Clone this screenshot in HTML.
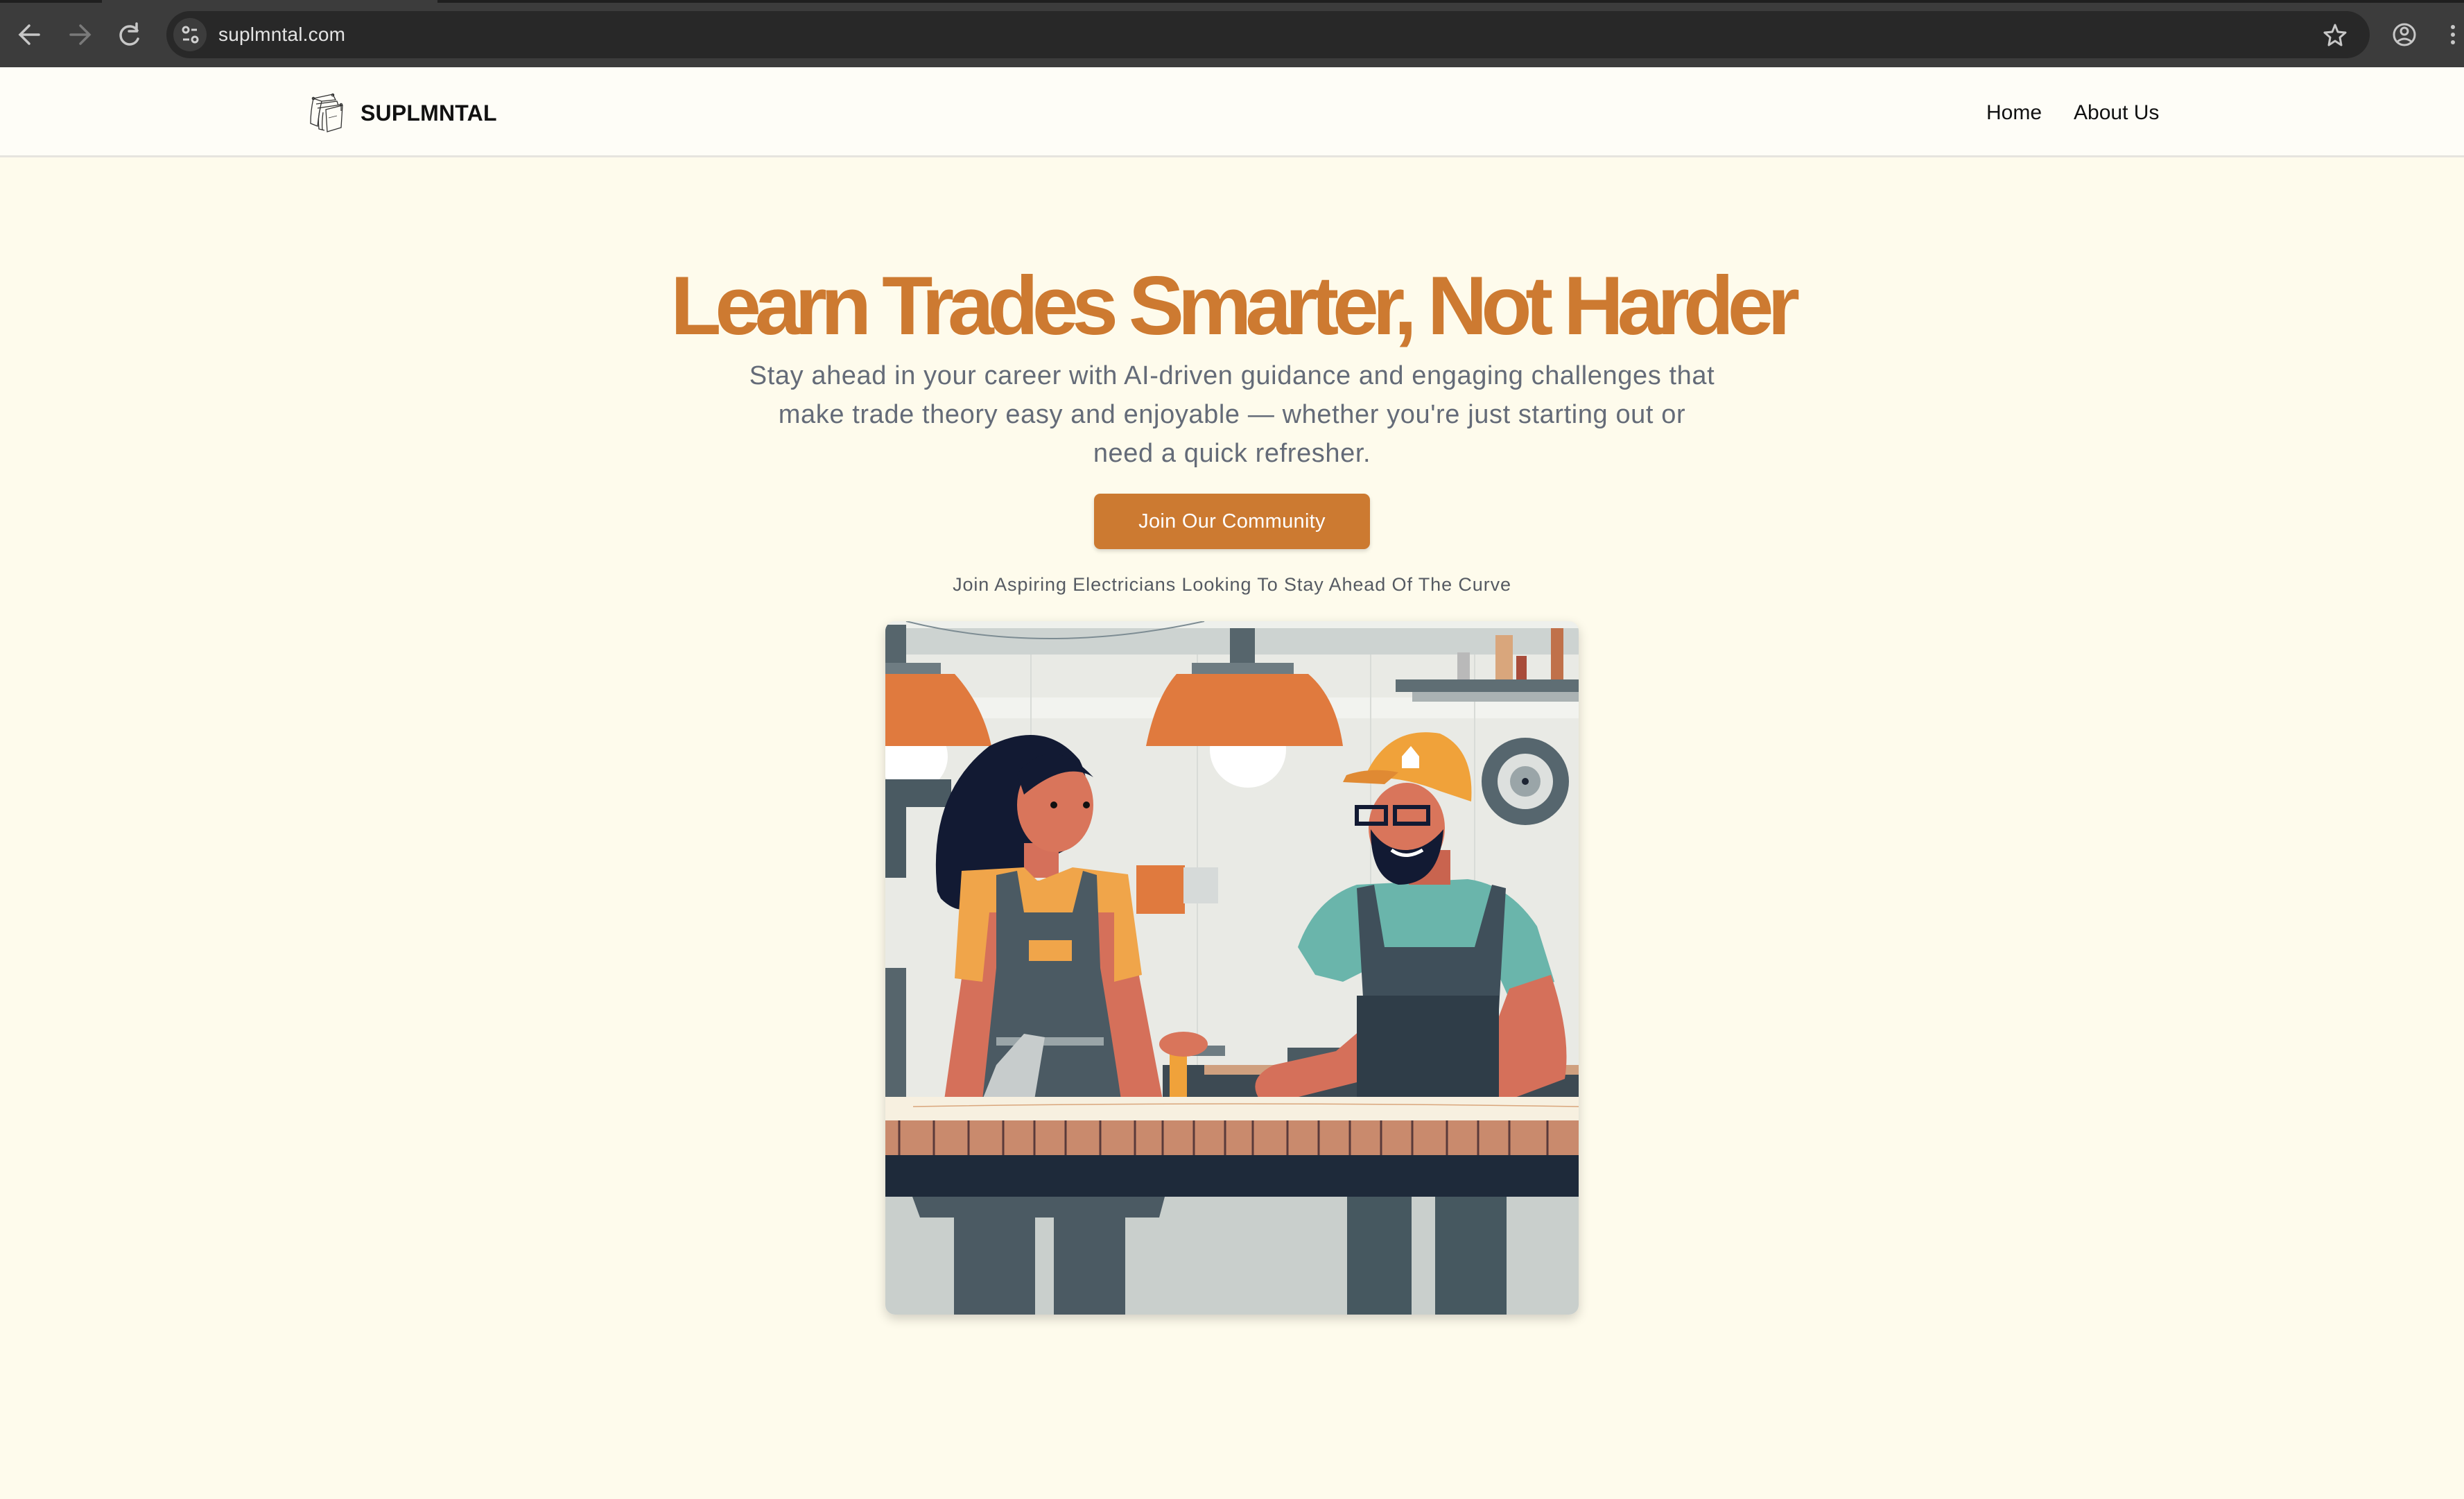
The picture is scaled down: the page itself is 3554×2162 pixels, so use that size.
<!DOCTYPE html>
<html><head><meta charset="utf-8">
<style>
*{margin:0;padding:0;box-sizing:border-box}
html,body{width:3554px;height:2162px;overflow:hidden;background:#fefbec;font-family:"Liberation Sans",sans-serif}
.chrome{position:absolute;left:0;top:0;width:3554px;height:97px;background:#3c3c3c}
.topstrip{position:absolute;left:0;top:0;width:3554px;height:4px;background:#1f1f1f}
.tab{position:absolute;left:147px;top:0;width:484px;height:4px;background:#3c3c3c}
.omni{position:absolute;left:240px;top:16px;width:3178px;height:68px;background:#282828;border-radius:34px}
.url{position:absolute;left:315px;top:34px;font-size:28px;color:#e3e3e3;letter-spacing:0.2px}
.hdr{position:absolute;left:0;top:97px;width:3554px;height:130px;background:#fefdf7;border-bottom:3px solid #e6e4df}
.brand{position:absolute;left:520px;top:145px;font-size:32px;font-weight:bold;color:#111;letter-spacing:0.2px}
.nav{position:absolute;top:146px;font-size:30px;color:#111}
h1{position:absolute;left:0;width:3554px;top:372px;text-align:center;font-size:120px;font-weight:bold;color:#cd7a31;letter-spacing:-9.2px;white-space:nowrap}
.sub{position:absolute;left:0;width:3554px;top:514px;text-align:center;font-size:38px;line-height:56px;color:#646b78;white-space:nowrap;letter-spacing:0.6px}
.btn{position:absolute;left:1578px;top:712px;width:398px;height:80px;background:#cc7a31;border-radius:9px;color:#fff;font-size:29px;text-align:center;line-height:80px;box-shadow:0 3px 6px rgba(0,0,0,0.15);letter-spacing:0.3px}
.small{position:absolute;left:0;width:3554px;top:828px;text-align:center;font-size:27px;color:#555a62;letter-spacing:0.9px}
.img{position:absolute;left:1277px;top:896px;width:1000px;height:1000px;border-radius:14px;overflow:hidden;box-shadow:0 6px 16px rgba(0,0,0,0.18)}
</style></head><body>
<div class="chrome"></div><div class="topstrip"></div><div class="tab"></div>
<div class="omni"></div>
<svg style="position:absolute;left:0;top:0" width="3554" height="97">
 <g stroke="#c7c7c7" stroke-width="3.5" fill="none" stroke-linecap="round">
  <path d="M56 50 H30 M42 37 L29 50 L42 63"/>
 </g>
 <g stroke="#7a7a7a" stroke-width="3.5" fill="none" stroke-linecap="round">
  <path d="M102 50 H128 M116 37 L129 50 L116 63"/>
 </g>
 <g stroke="#c7c7c7" stroke-width="3.5" fill="none" stroke-linecap="round">
  <path d="M198 44 A13 13 0 1 0 199 56"/><path d="M197 34 V45 H186"/>
 </g>
 <circle cx="274" cy="50" r="24" fill="#3c3c3c"/>
 <g stroke="#d0d0d0" stroke-width="3" fill="none">
  <circle cx="268" cy="43" r="4"/><path d="M276 43 H284"/><circle cx="281" cy="57" r="4"/><path d="M264 57 H273"/>
 </g>
 <path d="M3368 36 L3372 46 L3383 47 L3375 54 L3377 65 L3368 59 L3359 65 L3361 54 L3353 47 L3364 46 Z" stroke="#c7c7c7" stroke-width="3" fill="none" stroke-linejoin="round"/>
 <circle cx="3468" cy="50" r="15" stroke="#c7c7c7" stroke-width="3" fill="none"/>
 <circle cx="3468" cy="45" r="5" stroke="#c7c7c7" stroke-width="3" fill="none"/>
 <path d="M3458 60 Q3468 52 3478 60" stroke="#c7c7c7" stroke-width="3" fill="none"/>
 <circle cx="3538" cy="39" r="3" fill="#c7c7c7"/><circle cx="3538" cy="50" r="3" fill="#c7c7c7"/><circle cx="3538" cy="61" r="3" fill="#c7c7c7"/>
</svg>
<div class="url">suplmntal.com</div>
<div class="hdr"></div>
<svg style="position:absolute;left:440px;top:130px" width="70" height="64" viewBox="0 0 70 64">
 <g stroke="#333" stroke-width="1.3" fill="none">
  <path d="M12 12 Q8 30 8 48 L18 52 Q20 32 24 16 Z"/>
  <path d="M12 12 L40 6 L44 14 L24 16"/>
  <path d="M16 20 L46 16 L48 22"/>
  <path d="M18 26 L52 21 L52 30"/>
  <path d="M22 26 Q18 40 20 56 L28 58"/>
  <path d="M30 34 L54 28 L52 60 L32 66 Z" transform="translate(0,-6)"/>
  <path d="M26 32 Q24 46 25 58"/>
  <path d="M34 40 L46 37" stroke-width="0.8"/>
  <circle cx="40" cy="7" r="1.6"/><circle cx="12" cy="12" r="1.6"/><circle cx="52" cy="21" r="1.6"/>
 </g>
</svg>
<div class="brand">SUPLMNTAL</div>
<div class="nav" style="left:2865px">Home</div>
<div class="nav" style="left:2991px">About Us</div>

<h1>Learn Trades Smarter, Not Harder</h1>
<div class="sub">Stay ahead in your career with AI-driven guidance and engaging challenges that<br>make trade theory easy and enjoyable — whether you're just starting out or<br>need a quick refresher.</div>
<div class="btn">Join Our Community</div>
<div class="small">Join Aspiring Electricians Looking To Stay Ahead Of The Curve</div>

<div class="img">
<svg width="1000" height="1000" viewBox="0 0 1000 1000">
 <rect width="1000" height="1000" fill="#e9eae5"/>
 <rect y="0" width="1000" height="10" fill="#eef0ec"/>
 <rect y="10" width="1000" height="38" fill="#cdd3d1"/>
 <path d="M30 0 Q230 50 460 0" stroke="#7d8c93" stroke-width="2" fill="none"/>
 <rect x="0" y="110" width="1000" height="30" fill="#f2f3ef"/>
 <g stroke="#d8dbd7" stroke-width="2"><path d="M210 48 V640 M450 48 V640 M700 48 V640 M850 48 V640"/></g>
 <rect x="0" y="5" width="30" height="60" fill="#56656c"/>
 <rect x="0" y="60" width="80" height="16" fill="#6e7c82"/>
 <circle cx="40" cy="195" r="50" fill="#ffffff"/>
 <path d="M0 76 L100 76 Q140 120 153 180 L0 180 Z" fill="#e07a3e"/>
 <rect x="497" y="10" width="36" height="52" fill="#56656c"/>
 <rect x="442" y="60" width="147" height="16" fill="#6e7c82"/>
 <circle cx="523" cy="185" r="55" fill="#ffffff"/>
 <path d="M420 76 L610 76 Q650 110 660 180 L376 180 Q390 110 420 76 Z" fill="#e07a3e"/>
 <rect x="0" y="228" width="95" height="40" fill="#4a5a62"/>
 <rect x="0" y="250" width="30" height="120" fill="#4a5a62"/>
 <rect x="0" y="500" width="30" height="200" fill="#56656c"/>
 <rect x="736" y="84" width="264" height="18" fill="#5f6e74"/>
 <rect x="760" y="102" width="240" height="14" fill="#aab2b3"/>
 <rect x="880" y="20" width="25" height="64" fill="#d9a67c"/>
 <rect x="960" y="10" width="18" height="74" fill="#c0714a"/>
 <rect x="825" y="45" width="18" height="39" fill="#b9b9b9"/>
 <rect x="910" y="50" width="15" height="34" fill="#a84c3a"/>
 <circle cx="923" cy="231" r="63" fill="#56666e"/>
 <circle cx="923" cy="231" r="40" fill="#dde0de"/>
 <circle cx="923" cy="231" r="22" fill="#9aa5a8"/>
 <circle cx="923" cy="231" r="5" fill="#1d2533"/>
 <rect x="362" y="352" width="70" height="70" fill="#e07a3e"/>
 <rect x="430" y="355" width="50" height="52" fill="#d6dad9"/>
 <rect x="400" y="640" width="600" height="46" fill="#3d4a53"/>
 <rect x="460" y="640" width="540" height="14" fill="#cfa07f"/>
 <rect x="580" y="615" width="100" height="30" fill="#4a5a62"/>
 <path d="M75 390 Q60 250 150 180 Q230 140 280 200 Q310 260 260 330 L160 380 Q120 440 80 400 Z" fill="#121a33"/>
 <rect x="200" y="320" width="50" height="50" fill="#d5705a"/>
 <ellipse cx="245" cy="265" rx="55" ry="68" fill="#d9755b"/>
 <path d="M190 220 Q240 160 300 225 Q260 200 200 250 Z" fill="#121a33"/>
 <circle cx="243" cy="265" r="5" fill="#111"/><circle cx="290" cy="265" r="5" fill="#111"/>
 <path d="M85 690 L115 480 Q120 400 180 375 L330 372 Q360 400 360 480 L400 690 Z" fill="#d5705a"/>
 <path d="M110 360 L200 355 L220 375 L270 355 L350 365 L370 510 L330 520 L330 420 L150 420 L140 520 L100 515 Z" fill="#f0a54a"/>
 <path d="M160 366 L190 360 L200 420 L270 420 L285 360 L305 366 L310 500 Q330 620 340 690 L140 690 Q150 600 160 500 Z" fill="#4b5a63"/>
 <rect x="207" y="460" width="62" height="30" fill="#f0a54a"/>
 <rect x="160" y="600" width="155" height="12" fill="#9aa5a8"/>
 <path d="M160 640 L200 595 L230 600 L215 690 L140 690 Z" fill="#c7cccc"/>
 <path d="M540 690 Q520 660 560 640 L650 620 L720 560 L760 580 L700 660 L580 690 Z" fill="#d5705a"/>
 <path d="M595 470 Q620 400 680 380 L840 372 Q900 380 940 440 L965 520 L900 545 L880 500 L700 500 L660 520 L620 510 Z" fill="#6ab5ab"/>
 <path d="M900 530 L960 510 Q990 600 980 660 L900 690 L840 690 Z" fill="#d5705a"/>
 <path d="M680 385 L705 380 L720 470 L850 470 L875 380 L895 385 L885 560 L885 690 L685 690 L690 560 Z" fill="#3f4f5a"/>
 <rect x="680" y="540" width="205" height="150" fill="#2f3d48"/>
 <rect x="755" y="330" width="60" height="50" fill="#c9644f"/>
 <ellipse cx="752" cy="298" rx="55" ry="65" fill="#d9755b"/>
 <path d="M700 300 Q700 370 740 380 Q800 380 805 300 Q780 330 750 330 Q720 330 700 300 Z" fill="#121a33"/>
 <path d="M730 330 Q750 345 775 330" stroke="#fff" stroke-width="5" fill="none"/>
 <g stroke="#121a33" stroke-width="6" fill="none"><rect x="680" y="268" width="42" height="24"/><rect x="735" y="268" width="48" height="24"/></g>
 <path d="M696 215 Q730 150 800 162 Q850 185 845 260 L800 245 Q750 225 700 225 Z" fill="#f0a23a"/>
 <path d="M665 222 Q700 210 740 218 L720 235 L660 232 Z" fill="#e08a33"/>
 <path d="M745 195 L758 180 L770 195 L770 212 L745 212 Z" fill="#fff"/>
 <rect x="410" y="612" width="25" height="76" fill="#f0a23a"/>
 <rect x="435" y="612" width="55" height="15" fill="#6e7c82"/>
 <ellipse cx="430" cy="610" rx="35" ry="18" fill="#d9755b"/>
 <rect x="0" y="686" width="1000" height="34" fill="#f7f0e0"/>
 <path d="M40 700 Q500 692 1000 700" stroke="#d9a67c" stroke-width="1.5" fill="none"/>
 <rect x="0" y="720" width="1000" height="50" fill="#c98a6d"/>
 <g stroke="#5a3a3a" stroke-width="3">
  <path d="M20 720V770 M70 720V770 M120 720V770 M170 720V770 M215 720V770 M260 720V770 M310 720V770 M360 720V770 M400 720V770 M445 720V770 M490 720V770 M530 720V770 M580 720V770 M625 720V770 M670 720V770 M715 720V770 M760 720V770 M810 720V770 M855 720V770 M900 720V770 M955 720V770"/>
 </g>
 <rect x="0" y="770" width="1000" height="60" fill="#1e2a3a"/>
 <rect x="0" y="830" width="1000" height="170" fill="#c9cfcc"/>
 <path d="M39 830 L403 830 L395 860 L50 860 Z" fill="#4b5a63"/>
 <rect x="99" y="830" width="117" height="170" fill="#4b5a63"/>
 <rect x="243" y="830" width="103" height="170" fill="#4b5a63"/>
 <rect x="666" y="830" width="93" height="170" fill="#465860"/>
 <rect x="793" y="830" width="103" height="170" fill="#465860"/>
</svg>
</div>
</body></html>
